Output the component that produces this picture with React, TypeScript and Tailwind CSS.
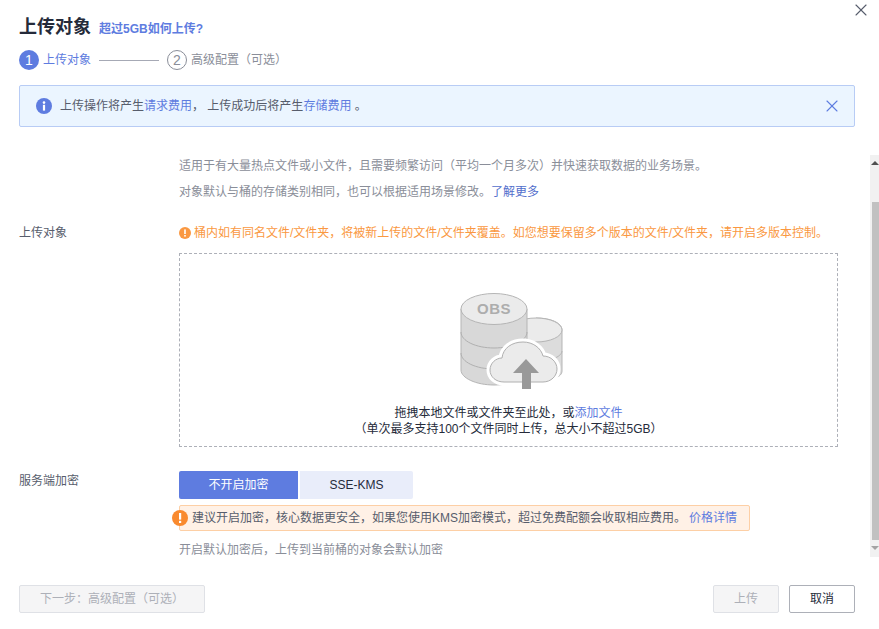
import { X } from 'lucide-react';

const font = { fontFamily: '"Liberation Sans", "Noto Sans CJK SC", sans-serif' };

function ObsIllustration() {
  return (
    <svg width="104" height="98" viewBox="0 0 104 98" fill="none">
      {/* small back cylinder */}
      <path d="M76 25 c 15 0 26 5 26 12 V78 c 0 6 -10 10 -26 10 Z" fill="#dcdcdc" stroke="#b5b5b5" />
      <ellipse cx="76" cy="37" rx="26" ry="12" fill="#ebebeb" stroke="#b5b5b5" />
      <path d="M102 58 c 0 5 -10 10 -24 11" stroke="#b5b5b5" />
      {/* big cylinder */}
      <path d="M1 16 V77 c 0 8 15 15 33 15 s 33 -7 33 -15 V16 Z" fill="#d8d8d8" stroke="#b5b5b5" />
      <path d="M1 39 c 0 9 15 16 33 16 s 33 -7 33 -16" stroke="#b0b0b0" />
      <path d="M1 60 c 0 9 15 16 33 16 s 33 -7 33 -16" stroke="#b0b0b0" />
      <ellipse cx="34" cy="16" rx="33" ry="15.5" fill="#ebebeb" stroke="#b5b5b5" />
      <text x="34" y="21" textAnchor="middle" fontSize="15" fontWeight="700" fill="#adadad" style={{ fontFamily: '"Liberation Sans", sans-serif', letterSpacing: '0.5px' }}>OBS</text>
      {/* cloud */}
      <path
        d="M44 89 c -8 0 -14 -5 -14 -12 c 0 -7 6 -12 12 -12 c 1 -10 10 -16 21 -16 c 10 0 18 6 20 14 c 8 0 14 6 14 13 c 0 7 -6 13 -14 13 Z"
        fill="#ffffff"
        stroke="#ffffff"
        strokeWidth="7"
        strokeLinejoin="round"
      />
      <path
        d="M44 89 c -8 0 -14 -5 -14 -12 c 0 -7 6 -12 12 -12 c 1 -10 10 -16 21 -16 c 10 0 18 6 20 14 c 8 0 14 6 14 13 c 0 7 -6 13 -14 13 Z"
        fill="#ebebeb"
        stroke="#b0b0b0"
      />
      <path d="M66 66 L53 80 H62 V96 H71 V80 H79 Z" fill="#999999" />
    </svg>
  );
}

export default function App() {
  return (
    <div className="w-[879px] h-[629px] bg-white flex flex-col overflow-hidden text-[12px] text-[#252b3a]" style={font}>
      {/* Header */}
      <div className="flex items-start justify-between pl-[19px] pr-[8px] pt-[14px] h-[50px]">
        <div className="flex items-baseline gap-[8px]">
          <span className="text-[18px] leading-[26px] font-bold text-[#252b3a]">上传对象</span>
          <a className="text-[12px] font-bold text-[#5e7ce0]">超过5GB如何上传?</a>
        </div>
        <X size={20} strokeWidth={1.3} className="text-[#575d6c] -mt-[14px]" />
      </div>

      {/* Steps */}
      <div className="flex items-center pl-[19px] h-[20px] mb-[15px]">
        <span className="w-[20px] h-[20px] rounded-full bg-[#5e7ce0] text-white flex items-center justify-center text-[14px]">1</span>
        <span className="ml-[4px] text-[#5e7ce0]">上传对象</span>
        <span className="ml-[8px] w-[60px] h-px bg-[#a6a9b5]"></span>
        <span className="ml-[8px] w-[20px] h-[20px] rounded-full border border-[#8a8e99] text-[#8a8e99] flex items-center justify-center text-[14px]">2</span>
        <span className="ml-[4px] text-[#8a8e99]">高级配置（可选）</span>
      </div>

      {/* Info banner */}
      <div className="mx-[19px] mr-[24px] h-[42px] shrink-0 flex items-center justify-between pl-[16px] pr-[12px] bg-[#ebf5ff] border border-[#b8ccf5] rounded-[2px]">
        <div className="flex items-center gap-[8px] text-[#575d6c]">
          <span className="w-[16px] h-[16px] rounded-full bg-[#5e7ce0] text-white flex items-center justify-center">
            <svg width="16" height="16" viewBox="0 0 16 16">
              <circle cx="8" cy="4.6" r="1.3" fill="#fff" />
              <rect x="6.9" y="6.8" width="2.2" height="5.8" fill="#fff" />
            </svg>
          </span>
          <span>
            上传操作将产生<a className="text-[#5e7ce0]">请求费用</a>， 上传成功后将产生<a className="text-[#5e7ce0]">存储费用</a> 。
          </span>
        </div>
        <X size={20} strokeWidth={1.3} className="text-[#5e7ce0]" />
      </div>

      {/* Scrollable body */}
      <div className="mt-[28px] h-[402px] shrink-0 flex">
        <div className="flex-1 min-w-0 pl-[19px] overflow-hidden">
          <div className="pl-[160px] pt-[2px] text-[#8a8e99] leading-[18px]">
            <p>适用于有大量热点文件或小文件，且需要频繁访问（平均一个月多次）并快速获取数据的业务场景。</p>
            <p className="mt-[8px]">
              对象默认与桶的存储类别相同，也可以根据适用场景修改。<a className="text-[#526ecc]">了解更多</a>
            </p>
          </div>

          <div className="flex mt-[23px]">
            <div className="w-[160px] shrink-0 text-[#575d6c] leading-[18px]">上传对象</div>
            <div className="w-[659px]">
              <div className="flex items-center gap-[3px] h-[18px] text-[#fa9841]">
                <span className="w-[12px] h-[12px] rounded-full bg-[#fa9841] flex items-center justify-center">
                  <svg width="12" height="12" viewBox="0 0 12 12">
                    <rect x="5.2" y="2.4" width="1.6" height="4.6" fill="#fff" />
                    <rect x="5.2" y="8" width="1.6" height="1.6" fill="#fff" />
                  </svg>
                </span>
                <span className="whitespace-nowrap">桶内如有同名文件/文件夹，将被新上传的文件/文件夹覆盖。如您想要保留多个版本的文件/文件夹，请开启多版本控制。</span>
              </div>
              <div className="mt-[11px] h-[194px] border border-dashed border-[#adb0b8] flex flex-col items-center">
                <div className="mt-[39px] h-[105px] ml-[7px]">
                  <ObsIllustration />
                </div>
                <div className="mt-[7px] text-center leading-[16px] text-[#252b3a]">
                  <p>拖拽本地文件或文件夹至此处，或<a className="text-[#5e7ce0]">添加文件</a></p>
                  <p>（单次最多支持100个文件同时上传，总大小不超过5GB）</p>
                </div>
              </div>
            </div>
          </div>

          <div className="flex mt-[24px]">
            <div className="w-[160px] shrink-0 text-[#575d6c] leading-[18px] mt-[1px]">服务端加密</div>
            <div>
              <div className="flex gap-[2px]">
                <button className="w-[119px] h-[28px] bg-[#5e7ce0] text-white rounded-l-[2px]">不开启加密</button>
                <button className="w-[113px] h-[28px] bg-[#e9edfa] text-[#252b3a] rounded-r-[2px]">SSE-KMS</button>
              </div>
              <div className="relative mt-[6px] w-[571px] h-[26px] flex items-center pl-[12px] bg-[#fff1e6] border border-[#fdcfa5] rounded-[2px] text-[#575d6c]">
                <span className="absolute -left-[8px] top-[4px] w-[16px] h-[16px] rounded-full bg-[#f98a2e] flex items-center justify-center">
                  <svg width="16" height="16" viewBox="0 0 16 16">
                    <rect x="7" y="3" width="2.2" height="6.6" fill="#fff" />
                    <rect x="7" y="10.8" width="2.2" height="2.2" fill="#fff" />
                  </svg>
                </span>
                <span className="whitespace-nowrap">
                  建议开启加密，核心数据更安全，如果您使用KMS加密模式，超过免费配额会收取相应费用。
                  <a className="ml-[3px] text-[#5e7ce0]">价格详情</a>
                </span>
              </div>
              <p className="mt-[10px] leading-[18px] text-[#8a8e99]">开启默认加密后，上传到当前桶的对象会默认加密</p>
            </div>
          </div>
        </div>

        {/* Scrollbar */}
        <div className="w-[9px] shrink-0 bg-[#f1f1f1] flex flex-col">
          <div className="h-[47px] flex justify-center pt-[6px]">
            <span className="w-0 h-0 border-x-[4px] border-x-transparent border-b-[4px] border-b-[#505050]"></span>
          </div>
          <div className="flex-1 bg-[#c1c1c1] ml-[2px]"></div>
          <div className="h-[17px] flex justify-center pt-[6px]">
            <span className="w-0 h-0 border-x-[4px] border-x-transparent border-t-[4px] border-t-[#a3a3a3]"></span>
          </div>
        </div>
      </div>

      {/* Footer */}
      <div className="mt-[28px] pl-[19px] pr-[24px] flex items-center justify-between">
        <button className="w-[186px] h-[28px] bg-[#f5f5f6] border border-[#dfe1e6] rounded-[2px] text-[#adb0b8]">下一步：高级配置（可选）</button>
        <div className="flex gap-[10px]">
          <button className="w-[66px] h-[28px] bg-[#f5f5f6] border border-[#dfe1e6] rounded-[2px] text-[#adb0b8]">上传</button>
          <button className="w-[66px] h-[28px] bg-white border border-[#adb0b8] rounded-[2px] text-[#252b3a]">取消</button>
        </div>
      </div>
    </div>
  );
}
